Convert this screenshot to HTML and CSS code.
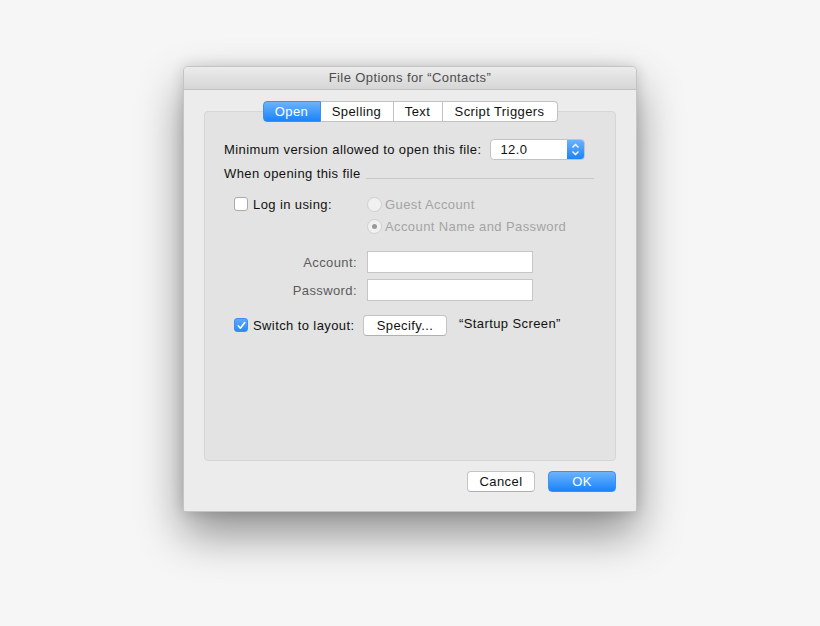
FILE: index.html
```html
<!DOCTYPE html>
<html lang="en">
<head>
    <meta charset="UTF-8">
    <title>File Options for “Contacts”</title>
    <link rel="stylesheet" href="styles.css">
</head>
<body>
    <div class="window">
        <div class="titlebar">File Options for “Contacts”</div>

        <div class="content">
            <div class="tabs">
                <span class="tab active tab-open">Open</span>
                <span class="tab tab-spelling">Spelling</span>
                <span class="tab tab-text">Text</span>
                <span class="tab tab-scripts">Script Triggers</span>
            </div>

            <div class="group">
                <div class="row version-row">
                    <span>Minimum version allowed to open this file:</span>
                    <div class="popup">
                        <span class="popup-value">12.0</span>
                        <span class="stepper">
                            <svg width="9" height="13" viewBox="0 0 9 13">
                                <path d="M1.5 4.5 L4.5 1.5 L7.5 4.5 M1.5 8.5 L4.5 11.5 L7.5 8.5" fill="none" stroke="#fff" stroke-width="1.4"/>
                            </svg>
                        </span>
                    </div>
                </div>

                <div class="row section-row">
                    <span>When opening this file</span>
                    <span class="rule"></span>
                </div>

                <div class="login">
                    <div class="login-label">
                        <span class="checkbox"></span>
                        <span>Log in using:</span>
                    </div>
                    <div class="radios">
                        <div class="radio-row"><span class="radio"></span>Guest Account</div>
                        <div class="radio-row"><span class="radio on"></span>Account Name and Password</div>
                    </div>
                </div>

                <div class="field-row first">
                    <label class="field-label">Account:</label>
                    <input class="field" type="text">
                </div>
                <div class="field-row">
                    <label class="field-label">Password:</label>
                    <input class="field" type="password">
                </div>

                <div class="switch-row">
                    <div class="switch-label">
                        <span class="checkbox checked">
                            <svg width="11" height="11" viewBox="0 0 11 11">
                                <path d="M2.2 5.8 L4.4 8.2 L8.8 2.6" fill="none" stroke="#fff" stroke-width="1.6" stroke-linecap="round" stroke-linejoin="round"/>
                            </svg>
                        </span>
                        <span>Switch to layout:</span>
                    </div>
                    <button class="btn specify">Specify...</button>
                    <span class="layout-name">“Startup Screen”</span>
                </div>
            </div>

            <div class="footer">
                <button class="btn">Cancel</button>
                <button class="btn primary">OK</button>
            </div>
        </div>
    </div>
</body>
</html>
```

FILE: styles.css
```css
html,
body {
    height: 626px;
}

body {
    margin: 0;
    background-color: #f6f6f6;
    font-family: 'Liberation Sans', Arial, sans-serif;
    font-size: 13px;
    letter-spacing: 0.4px;
    color: #111;
    overflow: hidden;
}

.window {
    width: 452px;
    height: 444px;
    margin: 66px 0 0 183px;
    background-color: #ececec;
    border: 1px solid #c4c4c4;
    border-radius: 5px 5px 2px 2px;
    box-shadow: 0 22px 45px rgba(0, 0, 0, 0.42), 0 0 14px rgba(0, 0, 0, 0.14);
    overflow: hidden;
}

.titlebar {
    height: 22px;
    line-height: 22px;
    text-align: center;
    color: #4d4d4d;
    background: linear-gradient(#ececec, #d6d6d6);
    border-bottom: 1px solid #c0c0c0;
}

.content {
    padding: 0 20px;
}

.tabs {
    display: flex;
    justify-content: center;
    margin-top: 11px;
    position: relative;
    z-index: 1;
}

.tab {
    height: 19px;
    line-height: 19px;
    text-align: center;
    background-color: #fff;
    border: 1px solid #c2c2c2;
    border-left: none;
    color: #111;
}

.tab:first-child {
    border-left: 1px solid #c2c2c2;
    border-radius: 4px 0 0 4px;
}

.tab:last-child {
    border-radius: 0 4px 4px 0;
}

.tab-open { width: 56px; }
.tab-spelling { width: 72px; }
.tab-text { width: 48px; }
.tab-scripts { width: 114px; }

.tab.active {
    color: #fff;
    background: linear-gradient(#6cb3fa, #1b83fb);
    border-color: #3d8ff0;
}

.group {
    height: 348px;
    margin-top: -11px;
    padding: 0 0 0 19px;
    background-color: #e3e3e3;
    border: 1px solid #d6d6d6;
    border-radius: 4px;
}

.row {
    display: flex;
    align-items: center;
}

.version-row {
    height: 21px;
    margin-top: 27px;
}

.popup {
    display: flex;
    width: 93px;
    height: 19px;
    margin-left: 9px;
    background-color: #fff;
    border: 1px solid #c3c3c3;
    border-radius: 4px;
    overflow: hidden;
}

.popup-value {
    flex-grow: 1;
    line-height: 19px;
    padding-left: 9px;
}

.stepper {
    width: 17px;
    display: flex;
    align-items: center;
    justify-content: center;
    background: linear-gradient(#6cb3fa, #1b83fb);
}

.section-row {
    height: 16px;
    margin-top: 5px;
    padding-right: 21px;
}

.rule {
    flex-grow: 1;
    height: 1px;
    margin: 10px 0 0 5px;
    background-color: #c9c9c9;
}

.login {
    display: flex;
    margin-top: 12px;
    padding-left: 10px;
}

.login-label,
.switch-label {
    display: flex;
    align-items: center;
    height: 22px;
    width: 133px;
}

.checkbox {
    width: 12px;
    height: 12px;
    margin-right: 5px;
    background-color: #fff;
    border: 1px solid #a9a9a9;
    border-radius: 3px;
    display: flex;
    align-items: center;
    justify-content: center;
}

.checkbox.checked {
    background: linear-gradient(#5fa8f9, #2a8af8);
    border-color: #3a8ff2;
}

.radio-row {
    display: flex;
    align-items: center;
    height: 22px;
    color: #a4a4a4;
}

.radio {
    width: 13px;
    height: 13px;
    margin-right: 3px;
    border: 1px solid #cfcfcf;
    border-radius: 50%;
    background-color: #f1f1f1;
    display: flex;
    align-items: center;
    justify-content: center;
}

.radio.on::after {
    content: "";
    width: 5px;
    height: 5px;
    border-radius: 50%;
    background-color: #9a9a9a;
}

.field-row {
    display: flex;
    align-items: center;
    margin-top: 6px;
}

.field-row.first {
    margin-top: 14px;
}

.field-label {
    width: 133px;
    text-align: right;
    color: #5c5c5c;
    margin-right: 10px;
}

.field {
    width: 164px;
    height: 20px;
    margin: 0;
    padding: 0;
    border: 1px solid #c6c6c6;
    background-color: #fff;
    box-sizing: content-box;
}

.switch-row {
    display: flex;
    align-items: center;
    margin-top: 13px;
    padding-left: 10px;
}

.switch-label {
    width: 129px;
}

.btn {
    font-family: 'Liberation Sans', Arial, sans-serif;
    font-size: 13px;
    letter-spacing: 0.4px;
    color: #111;
    height: 21px;
    padding: 0;
    background-color: #fff;
    border: 1px solid #c4c4c4;
    border-bottom-color: #b0b0b0;
    border-radius: 4px;
}

.specify {
    width: 84px;
}

.layout-name {
    margin-left: 12px;
    margin-top: -3px;
}

.footer {
    display: flex;
    justify-content: flex-end;
    gap: 13px;
    margin-top: 10px;
}

.footer .btn {
    width: 68px;
}

.btn.primary {
    color: #fff;
    background: linear-gradient(#6cb3fa, #1b83fb);
    border-color: #3d8ff0;
}
```
